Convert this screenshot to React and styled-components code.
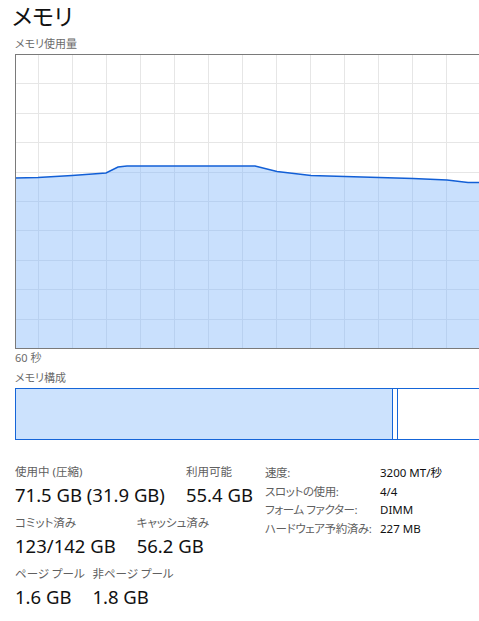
import styled, { createGlobalStyle } from 'styled-components';

const GlobalStyle = createGlobalStyle`
  html, body {
    margin: 0;
    padding: 0;
    background: #ffffff;
    overflow: hidden;
  }
  body {
    width: 479px;
    height: 621px;
    font-family: 'Noto Sans', 'Noto Sans CJK JP', sans-serif;
    font-feature-settings: 'palt';
    color: #1b1b1b;
  }
`;

const chartPoints = [
  [0, 124], [23, 123.5], [57, 121.5], [91, 119], [103, 113], [112, 112],
  [240, 112], [262, 117.5], [296, 121.5], [330, 122.5], [364, 123.5],
  [398, 124.5], [432, 126], [453, 128.5], [475, 128.5],
];

const CHART_W = 475;
const CHART_H = 294;

const memoryStats = [
  [
    { label: '使用中 (圧縮)', value: '71.5 GB (31.9 GB)' },
    { label: '利用可能', value: '55.4 GB' },
  ],
  [
    { label: 'コミット済み', value: '123/142 GB' },
    { label: 'キャッシュ済み', value: '56.2 GB' },
  ],
  [
    { label: 'ページ プール', value: '1.6 GB' },
    { label: '非ページ プール', value: '1.8 GB' },
  ],
];

const hardwareInfo = [
  ['速度:', '3200 MT/秒'],
  ['スロットの使用:', '4/4'],
  ['フォーム ファクター:', 'DIMM'],
  ['ハードウェア予約済み:', '227 MB'],
];

function GridLines({ stroke }) {
  const vLines = [];
  for (let x = 23; x < CHART_W; x += 34) vLines.push(x);
  const hLines = [];
  for (let i = 1; i < 10; i++) hLines.push(Math.round(i * 29.4));
  return (
    <g stroke={stroke}>
      {vLines.map((x) => (
        <line key={`v${x}`} x1={x + 0.5} y1="0" x2={x + 0.5} y2={CHART_H} />
      ))}
      {hLines.map((y) => (
        <line key={`h${y}`} x1="0" y1={y + 0.5} x2={CHART_W} y2={y + 0.5} />
      ))}
    </g>
  );
}

function UsageChart() {
  const line = chartPoints.map(([x, y]) => `${x},${y}`).join(' ');
  const area = `0,${CHART_H} ${line} ${CHART_W},${CHART_H}`;

  return (
    <ChartSvg width={CHART_W} height={CHART_H + 1} viewBox={`0 0 ${CHART_W} ${CHART_H + 1}`}>
      <defs>
        <clipPath id="usage-area">
          <polygon points={area} />
        </clipPath>
      </defs>
      <GridLines stroke="#e6e6e6" />
      <polygon points={area} fill="#c9e0fd" />
      <g clipPath="url(#usage-area)">
        <GridLines stroke="#b9d1f0" />
      </g>
      <polyline points={line} fill="none" stroke="#125fd6" strokeWidth="1.4" />
      <line x1="0.5" y1="0" x2="0.5" y2={CHART_H + 1} stroke="#7a7a7a" />
      <line x1="0" y1="0.5" x2={CHART_W} y2="0.5" stroke="#7a7a7a" />
      <line x1="0" y1={CHART_H + 0.5} x2={CHART_W} y2={CHART_H + 0.5} stroke="#7a7a7a" />
    </ChartSvg>
  );
}

export default function App() {
  return (
    <>
      <GlobalStyle />
      <Page>
        <Title>メモリ</Title>
        <SectionLabel>メモリ使用量</SectionLabel>
        <UsageChart />
        <SectionLabel $top={1}>60 秒</SectionLabel>
        <SectionLabel $top={4}>メモリ構成</SectionLabel>
        <CompositionBar>
          <BarSegment $width={376} $fill="#cce2fd" />
          <BarSegment $width={4} $fill="#ffffff" />
          <BarRest />
        </CompositionBar>
        <Details>
          <StatsBlock>
            {memoryStats.map((row, i) => (
              <StatsRow key={i}>
                {row.map((s) => (
                  <Stat key={s.label}>
                    <StatLabel>{s.label}</StatLabel>
                    <StatValue>{s.value}</StatValue>
                  </Stat>
                ))}
              </StatsRow>
            ))}
          </StatsBlock>
          <InfoGrid>
            {hardwareInfo.map(([k, v]) => (
              <InfoPair key={k}>
                <InfoKey>{k}</InfoKey>
                <InfoValue>{v}</InfoValue>
              </InfoPair>
            ))}
          </InfoGrid>
        </Details>
      </Page>
    </>
  );
}

const Page = styled.div`
  padding: 0 0 0 15px;
  display: flex;
  flex-direction: column;
  align-items: flex-start;
`;

const Title = styled.h1`
  margin: 1px 0 0 -3px;
  font-size: 23px;
  font-weight: 400;
  line-height: 30px;
  color: #111111;
`;

const SectionLabel = styled.div`
  margin-top: ${(p) => p.$top ?? 5}px;
  font-size: 11px;
  line-height: 16px;
  color: #6b6b6b;
`;

const ChartSvg = styled.svg`
  display: block;
  margin-top: 2px;
`;

const CompositionBar = styled.div`
  margin-top: 2px;
  width: 475px;
  height: 50px;
  display: flex;
  border-top: 1px solid #1565d8;
  border-bottom: 1px solid #1565d8;
  border-left: 1px solid #1565d8;
`;

const BarSegment = styled.div`
  flex: 0 0 ${(p) => p.$width}px;
  background: ${(p) => p.$fill};
  border-right: 1px solid #1565d8;
`;

const BarRest = styled.div`
  flex: 1;
  background: #ffffff;
`;

const Details = styled.div`
  margin-top: 24px;
  display: flex;
  align-items: flex-start;
  width: 464px;
`;

const StatsBlock = styled.div`
  width: 250px;
  display: flex;
  flex-direction: column;
  gap: 7px;
`;

const StatsRow = styled.div`
  display: flex;
  gap: 21px;
`;

const Stat = styled.div`
  display: flex;
  flex-direction: column;
`;

const StatLabel = styled.div`
  width: 0;
  white-space: nowrap;
  font-size: 11.5px;
  line-height: 16px;
  color: #606060;
`;

const StatValue = styled.div`
  margin-top: 2px;
  font-size: 18.5px;
  line-height: 26px;
  color: #111111;
  white-space: nowrap;
`;

const InfoGrid = styled.div`
  display: grid;
  grid-template-columns: 115px auto;
  align-content: start;
  row-gap: 1px;
`;

const InfoPair = styled.div`
  display: contents;
`;

const InfoKey = styled.div`
  font-size: 11.5px;
  line-height: 17.5px;
  letter-spacing: -0.4px;
  white-space: nowrap;
  color: #606060;
`;

const InfoValue = styled.div`
  font-size: 11.5px;
  line-height: 17.5px;
  color: #111111;
`;
